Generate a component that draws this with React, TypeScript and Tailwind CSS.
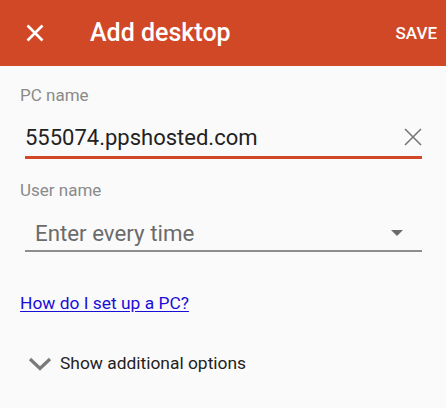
export default function App() {
  return (
    <div className="w-[446px] h-[408px] bg-[#fafafa] overflow-hidden" style={{ fontFamily: "Roboto, 'Noto Sans', sans-serif" }}>
      <header className="h-[66px] bg-[#d14826] flex items-center text-white">
        <button className="ml-[26px] w-[18px] h-[18px] flex items-center justify-center">
          <svg width="18" height="18" viewBox="0 0 18 18">
            <path d="M1.5 1.5 L16.5 16.5 M16.5 1.5 L1.5 16.5" stroke="white" strokeWidth="2.6" />
          </svg>
        </button>
        <h1 className="ml-[46px] text-[25px] font-medium leading-none pb-[2px]">Add desktop</h1>
        <span className="ml-auto mr-[9px] text-[17px] font-medium leading-none">SAVE</span>
      </header>

      <div className="px-[20px]">
        <label className="block pt-[19px] text-[17px] leading-[20px] text-[#8a8a8a]">PC name</label>
        <div className="ml-[5px] mr-[4px] mt-[17px] flex items-center border-b-[3px] border-[#d14826] h-[37px]">
          <span className="text-[22px] text-[#222] leading-none pb-[3px]">555074.ppshosted.com</span>
          <svg className="ml-auto mb-[4px]" width="18" height="18" viewBox="0 0 18 18">
            <path d="M1 1 L17 17 M17 1 L1 17" stroke="#777" strokeWidth="1.6" />
          </svg>
        </div>

        <label className="block mt-[21px] text-[17px] leading-[20px] text-[#8a8a8a]">User name</label>
        <div className="ml-[5px] mr-[4px] mt-[17px] flex items-center border-b-[2px] border-[#8d8d8d] h-[35px]">
          <span className="ml-[10px] text-[22.3px] text-[#6b6b6b] leading-none pb-[1px]">Enter every time</span>
          <svg className="ml-auto mr-[19px] mb-[1px]" width="12" height="6" viewBox="0 0 12 6">
            <path d="M0 0 H12 L6 6 Z" fill="#6b6b6b" />
          </svg>
        </div>

        <a href="#" className="block mt-[41px] text-[17.4px] leading-[20px] text-[#1a0dd8] underline underline-offset-[2px]">How do I set up a PC?</a>

        <div className="mt-[42px] flex items-center">
          <svg className="ml-[8px]" width="24" height="14" viewBox="0 0 24 14">
            <path d="M2 2 L12 11.5 L22 2" stroke="#7a7a7a" strokeWidth="3.2" fill="none" />
          </svg>
          <span className="ml-[8px] text-[17.4px] text-[#222] leading-none">Show additional options</span>
        </div>
      </div>
    </div>
  );
}
